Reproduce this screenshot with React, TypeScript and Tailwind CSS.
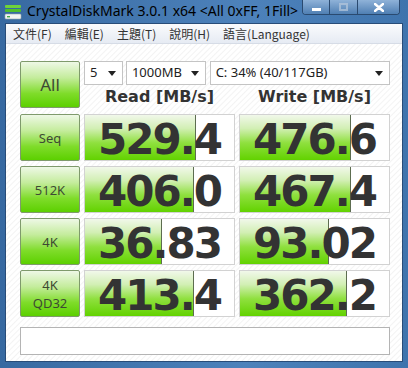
import React from "react";

type TRow = {
  label: string[];
  read: string;
  write: string;
  readFill: number;
  writeFill: number;
};

const rows: TRow[] = [
  { label: ["Seq"], read: "529.4", write: "476.6", readFill: 111, writeFill: 111 },
  { label: ["512K"], read: "406.0", write: "467.4", readFill: 109, writeFill: 111 },
  { label: ["4K"], read: "36.83", write: "93.02", readFill: 77, writeFill: 89 },
  { label: ["4K", "QD32"], read: "413.4", write: "362.2", readFill: 109, writeFill: 107 },
];

const menu = ["文件(F)", "編輯(E)", "主題(T)", "說明(H)", "語言(Language)"];

const greenBtn =
  "border border-[#7f9a6c] rounded-[2px] bg-[linear-gradient(to_bottom,#eef8e6_0%,#c4ec9c_35%,#7fdc2a_70%,#5cd000_100%)] flex flex-col items-center justify-center text-[#3d4a33]";

const AppIcon = () => (
  <svg width="18" height="16" viewBox="0 0 18 16">
    <rect x="1" y="1" width="16" height="3" rx="1" fill="#6fd23a" />
    <rect x="1" y="5" width="16" height="3" rx="1" fill="#4fbf2a" />
    <rect x="1" y="10" width="16" height="5" rx="1" fill="#f2f4f2" stroke="#9aa" strokeWidth="0.6" />
    <rect x="3" y="12" width="3" height="1.4" fill="#4a4" />
  </svg>
);

const Dropdown = ({ text, className }: { text: string; className: string }) => (
  <div
    className={`h-[24px] bg-white border border-[#c4c4c4] flex items-center justify-between pl-[5px] pr-[6px] text-[13px] text-[#222] ${className}`}
  >
    <span>{text}</span>
    <svg width="8" height="5" viewBox="0 0 8 5">
      <path d="M0 0 L8 0 L4 5 Z" fill="#222" />
    </svg>
  </div>
);

const ValueBox = ({ value, fill }: { value: string; fill: number }) => (
  <div className="relative h-[47px] bg-white border border-[#d2d2d2]">
    <div
      className="absolute left-0 top-0 bottom-0 border-r border-[#5d6d50] bg-[linear-gradient(to_bottom,#f1f8ea_0%,#d2efb4_30%,#8fe03e_62%,#62d200_100%)]"
      style={{ width: fill }}
    />
    <div className="relative h-full flex items-center justify-center pt-[4px] font-['DejaVu_Sans',sans-serif] font-bold text-[42px] leading-[42px] tracking-[-2px] text-[#333]">
      {value}
    </div>
  </div>
);

export default function App() {
  return (
    <div className="w-[408px] h-[368px] flex flex-col overflow-hidden bg-[linear-gradient(to_right,#3769a1,#4d82bb_60%,#3f74ad)] font-['Noto_Sans',sans-serif]">
      {/* title bar */}
      <div className="h-[22px] flex items-start">
        <div className="pl-[4px] pt-[4px]">
          <AppIcon />
        </div>
        <div className="pl-[5px] pt-[1px] text-[14px] leading-[20px] text-black">
          CrystalDiskMark 3.0.1 x64 &lt;All 0xFF, 1Fill&gt;
        </div>
        <div className="ml-auto mr-[8px] flex h-[15px] border border-[#2a4a70] border-t-0 rounded-b-[4px] overflow-hidden shadow-[inset_0_0_0_1px_rgba(255,255,255,0.35)]">
          <div className="w-[27px] flex items-center justify-center bg-[linear-gradient(to_bottom,#8fb2d8,#4f7fb3)] border-r border-[#2a4a70]">
            <div className="w-[9px] h-[3px] bg-white mt-[4px]" />
          </div>
          <div className="w-[28px] flex items-center justify-center bg-[linear-gradient(to_bottom,#8fb2d8,#4f7fb3)] border-r border-[#2a4a70]">
            <div className="w-[9px] h-[8px] border-2 border-[#b7c8dc] opacity-70" />
          </div>
          <div className="w-[41px] flex items-center justify-center bg-[linear-gradient(to_bottom,#8fb2d8,#4f7fb3)]">
            <svg width="10" height="9" viewBox="0 0 10 9">
              <path d="M1 1 L9 8 M9 1 L1 8" stroke="white" strokeWidth="2.4" strokeLinecap="round" />
            </svg>
          </div>
        </div>
      </div>

      {/* body */}
      <div className="flex-1 mx-[5px] mb-[6px] mt-[1px] flex flex-col border border-[#284c78]">
        <div className="h-[20px] flex items-center gap-[13px] pl-[7px] bg-[linear-gradient(to_bottom,#fafbfd,#e6ebf3)] border-b border-[#d6dce6] text-[12px] text-[#333] font-['Noto_Sans_CJK_TC','Noto_Sans',sans-serif]">
          {menu.map((m) => (
            <span key={m}>{m}</span>
          ))}
        </div>

        <div className="flex-1 pl-[14px] pt-[17px] bg-[repeating-linear-gradient(135deg,#ffffff_0px,#ffffff_2px,#f3f3f3_3px,#ffffff_4px)]">
          <div className="grid grid-cols-[60px_151px_151px] gap-x-[4px] gap-y-[5px]">
            <div className={`${greenBtn} h-[47px] text-[17px] leading-[20px]`}>All</div>
            <div className="col-span-2 flex flex-col">
              <div className="flex gap-[3px]">
                <Dropdown text="5" className="w-[39px]" />
                <Dropdown text="1000MB" className="w-[80px]" />
                <Dropdown text="C: 34% (40/117GB)" className="w-[181px] ml-[1px]" />
              </div>
              <div className="flex flex-1 items-center font-['DejaVu_Sans',sans-serif] font-bold text-[16px] text-[#333]">
                <div className="w-[151px] text-center">Read [MB/s]</div>
                <div className="w-[151px] ml-[4px] text-center">Write [MB/s]</div>
              </div>
            </div>

            {rows.map((r) => (
              <React.Fragment key={r.read}>
                <div className={`${greenBtn} h-[47px] text-[13px] leading-[18px]`}>
                  {r.label.map((l) => (
                    <span key={l}>{l}</span>
                  ))}
                </div>
                <ValueBox value={r.read} fill={r.readFill} />
                <ValueBox value={r.write} fill={r.writeFill} />
              </React.Fragment>
            ))}
          </div>
          <div className="mt-[10px] w-[370px] h-[28px] bg-white border border-[#b4b4b4]" />
        </div>
      </div>
    </div>
  );
}
